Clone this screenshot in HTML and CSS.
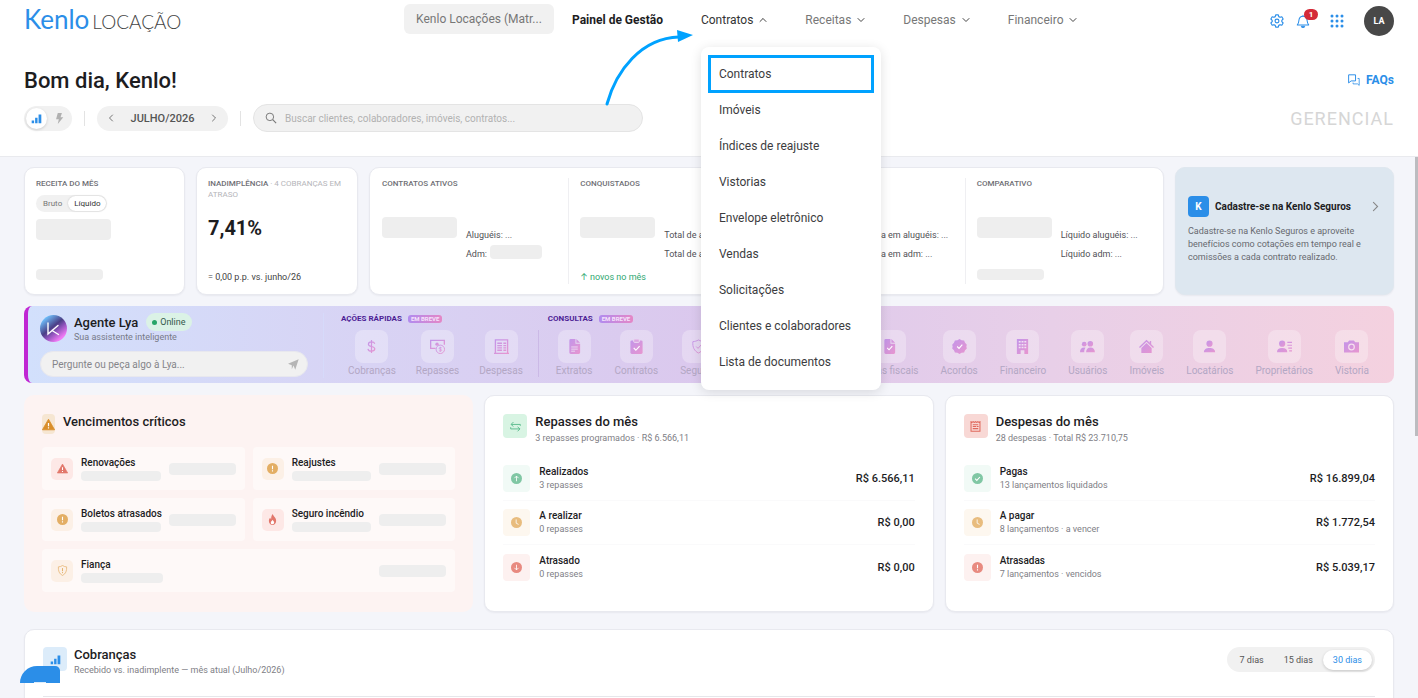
FILE: index.html
```html
<!DOCTYPE html>
<html lang="pt-BR">
<head>
<meta charset="utf-8">
<title>Kenlo Locação</title>
<link rel="stylesheet" href="styles.css">
</head>
<body>
<svg class="defs" width="0" height="0" aria-hidden="true">
  <defs>
    <linearGradient id="lya" x1="0" y1="0" x2="1" y2="1"><stop offset="0" stop-color="#c295ea"/><stop offset="1" stop-color="#e896cf"/></linearGradient>
    <symbol id="down" viewBox="0 0 8 8"><path d="M1 2.500l3 3 3-3" fill="none" stroke="#444" stroke-linecap="round"/></symbol>
    <symbol id="up" viewBox="0 0 8 8"><path d="M1 5.500l3-3 3 3" fill="none" stroke="#444" stroke-linecap="round"/></symbol>
    <symbol id="left" viewBox="0 0 8 8"><path d="M5.500 1l-3 3 3 3" fill="none" stroke="currentColor" stroke-width=".8" stroke-linecap="round"/></symbol>
    <symbol id="right" viewBox="0 0 8 8"><path d="M2.500 1l3 3-3 3" fill="none" stroke="currentColor" stroke-width=".8" stroke-linecap="round"/></symbol>
    <symbol id="bars" viewBox="0 0 16 16"><path d="M1 11h3.500v4H1zM6 7h3.500v8H6zM11 2h4v13h-4z" fill="currentColor"/></symbol>
    <symbol id="warn" viewBox="0 0 16 16"><path d="M8 1.500L15.500 14.500H.5z" fill="currentColor" stroke="currentColor" stroke-linejoin="round"/><path d="M8 6v4M8 11.500v1.500" stroke="#fff" stroke-width="1.500"/></symbol>
    <symbol id="alert" viewBox="0 0 16 16"><circle cx="8" cy="8" r="8" fill="currentColor"/><path d="M8 4v5M8 10.500v1.800" stroke="#fff" stroke-width="1.600"/></symbol>
    <symbol id="clock" viewBox="0 0 16 16"><circle cx="8" cy="8" r="8" fill="currentColor"/><path d="M7.500 3.500V9l3.500 1.800" fill="none" stroke="#fff" stroke-width="1.200"/></symbol>
    <symbol id="arrow-up" viewBox="0 0 16 16"><circle cx="8" cy="8" r="8" fill="currentColor"/><path d="M8 12V4.500M5 7.500l3-3 3 3" fill="none" stroke="#fff" stroke-width="1.200"/></symbol>
    <symbol id="arrow-down" viewBox="0 0 16 16"><circle cx="8" cy="8" r="8" fill="currentColor"/><path d="M8 4v7.500M5 8.500l3 3 3-3" fill="none" stroke="#fff" stroke-width="1.200"/></symbol>
    <symbol id="check" viewBox="0 0 16 16"><circle cx="8" cy="8" r="8" fill="currentColor"/><path d="M4.500 8.300L7 10.800l4.500-5" fill="none" stroke="#fff" stroke-width="1.500"/></symbol>
    <symbol id="flame" viewBox="0 0 16 16"><path d="M8.500 0c.3 3 4.800 5 4.800 9.800 0 3.600-2.300 6.200-5.300 6.200s-5.300-2.400-5.300-5.800c0-2.200 1-3.700 2-4.700.1 1 .5 1.700 1.300 2C6 4.500 6.500 1.800 8.500 0z" fill="currentColor"/><path d="M8.200 8.500c.4 1.500 2.200 2.200 2.200 4 0 1.400-1 2.500-2.400 2.500s-2.500-1-2.500-2.400c0-1.600 1.900-2.300 2.700-4.100z" fill="#fff"/></symbol>
    <symbol id="shield" viewBox="0 0 16 16"><path d="M8 .8c2 1.300 4 1.800 6 1.900.5 6-1.500 10.300-6 12.500C3.500 13 1.500 8.700 2 2.700 4 2.600 6 2.100 8 .8z" fill="none" stroke="currentColor"/><path d="M8 4.500V9M8 10.300v1.500" stroke="currentColor" stroke-width="1.400"/></symbol>
    <symbol id="list" viewBox="0 0 16 16"><path d="M1.500 1v14h13V1l-1.500 1-1.600-1-1.700 1L8 1 6.300 2 4.600 1 3 2z" fill="none" stroke="currentColor" stroke-width="1.500"/><path d="M4 5.500h8M4 8h5M10 8h2.500M4 11h8" stroke="currentColor" stroke-width="1.700"/></symbol>
  </defs>
</svg>

<header class="head">
  <div class="topbar">
    <a class="logo" href="#"><span class="logo-name">Kenlo</span><span class="logo-product">LOCAÇÃO</span></a>
    <button class="branch" type="button">Kenlo Locações (Matr...</button>
    <nav class="nav">
      <a class="nav-link strong" href="#">Painel de Gestão</a>
      <div class="nav-item">
        <a class="nav-link open" href="#">Contratos <svg class="chev"><use href="#up"/></svg></a>
        <svg class="pointer" viewBox="0 0 92 80" aria-hidden="true"><path d="M4 75C13 42 38 9 76 8" fill="none" stroke="#00a2ff" stroke-width="3" stroke-linecap="round"/><path d="M74 1l16 5-15 7z" fill="#00a2ff"/></svg>
        <div class="menu">
          <a class="menu-item marked" href="#">Contratos</a>
          <a class="menu-item" href="#">Imóveis</a>
          <a class="menu-item" href="#">Índices de reajuste</a>
          <a class="menu-item" href="#">Vistorias</a>
          <a class="menu-item" href="#">Envelope eletrônico</a>
          <a class="menu-item" href="#">Vendas</a>
          <a class="menu-item" href="#">Solicitações</a>
          <a class="menu-item" href="#">Clientes e colaboradores</a>
          <a class="menu-item" href="#">Lista de documentos</a>
        </div>
      </div>
      <a class="nav-link" href="#">Receitas <svg class="chev"><use href="#down"/></svg></a>
      <a class="nav-link" href="#">Despesas <svg class="chev"><use href="#down"/></svg></a>
      <a class="nav-link" href="#">Financeiro <svg class="chev"><use href="#down"/></svg></a>
    </nav>
    <div class="tools">
      <button class="tool" type="button" aria-label="Configurações"><svg viewBox="0 0 16 16"><path d="M6.500 1h3l.5 2 1.500.8 2-.6 1.500 2.500L13.500 7.200v1.600l1.500 1.500-1.500 2.500-2-.6-1.500.8-.5 2h-3L6 13l-1.500-.8-2 .6L1 10.300l1.500-1.500V7.200L1 5.700l1.500-2.500 2 .6L6 3z" fill="none" stroke="currentColor" stroke-width="1.300" stroke-linejoin="round"/><circle cx="8" cy="8" r="2.200" fill="none" stroke="currentColor" stroke-width="1.300"/></svg></button>
      <button class="tool bell" type="button" aria-label="Notificações"><svg viewBox="0 0 16 16"><path d="M1.500 12.500c1.500-1.300 1.600-3 1.800-5C3.500 4.500 5 2.500 8 2.500s4.500 2 4.700 5c.2 2 .3 3.700 1.800 5z" fill="none" stroke="currentColor" stroke-width="1.200" stroke-linejoin="round"/><path d="M8 1v2M6 14h4l-1 1.800H7z" stroke="currentColor" fill="currentColor"/></svg><span class="badge">1</span></button>
      <button class="tool apps" type="button" aria-label="Aplicativos"><svg viewBox="0 0 14 14" fill="currentColor"><circle cx="2" cy="2" r="1.500"/><circle cx="7" cy="2" r="1.500"/><circle cx="12" cy="2" r="1.500"/><circle cx="2" cy="7" r="1.500"/><circle cx="7" cy="7" r="1.500"/><circle cx="12" cy="7" r="1.500"/><circle cx="2" cy="12" r="1.500"/><circle cx="7" cy="12" r="1.500"/><circle cx="12" cy="12" r="1.500"/></svg></button>
      <button class="user" type="button">LA</button>
    </div>
  </div>

  <div class="welcome">
    <h1>Bom dia, Kenlo!</h1>
    <a class="faqs" href="#"><svg viewBox="0 0 16 16"><path d="M2 1h8.500v7.500H5L2 11z" fill="none" stroke="currentColor" stroke-width="1.200" stroke-linejoin="round"/><path d="M13 5.500h2V14l-2-1.800H7.500V10.500" fill="none" stroke="currentColor"/></svg>FAQs</a>
  </div>

  <div class="filters">
    <div class="view-toggle">
      <button class="view on" type="button" aria-label="Gerencial"><svg><use href="#bars"/></svg></button>
      <button class="view" type="button" aria-label="Rápido"><svg viewBox="0 0 16 16"><path d="M5.500 0h6L9.500 6h4L5.500 16 7 9H3z" fill="currentColor"/></svg></button>
    </div>
    <span class="rule"></span>
    <div class="month">
      <button type="button" aria-label="Mês anterior"><svg><use href="#left"/></svg></button>
      <span>JULHO/2026</span>
      <button type="button" aria-label="Próximo mês"><svg><use href="#right"/></svg></button>
    </div>
    <span class="rule"></span>
    <label class="search">
      <svg viewBox="0 0 16 16"><circle cx="6.500" cy="6.500" r="5" fill="none" stroke="currentColor" stroke-width="1.300"/><path d="M10.300 10.300l4.500 4.500" stroke="currentColor" stroke-width="1.500"/></svg>
      <input type="search" aria-label="Buscar" placeholder="Buscar clientes, colaboradores, imóveis, contratos...">
    </label>
    <span class="mode">GERENCIAL</span>
  </div>
</header>

<main class="main">
  <div class="scroll-thumb"></div>

  <section class="kpis">
    <article class="card kpi">
      <h2 class="label">RECEITA DO MÊS</h2>
      <div class="mini-toggle"><button type="button">Bruto</button><button class="on" type="button">Líquido</button></div>
      <span class="sk sk-value"></span>
      <span class="sk sk-foot push"></span>
    </article>
    <article class="card kpi">
      <h2 class="label">INADIMPLÊNCIA <span>· 4 COBRANÇAS EM ATRASO</span></h2>
      <strong class="rate">7,41%</strong>
      <span class="note push">= 0,00 p.p. vs. junho/26</span>
    </article>
    <article class="card contracts">
      <div class="col">
        <h2 class="label">CONTRATOS ATIVOS</h2>
        <div class="figures"><span class="sk sk-value"></span><div class="lines"><span>Aluguéis: ...</span><span class="with-sk">Adm: <i class="sk sk-adm"></i></span></div></div>
      </div>
      <div class="col">
        <h2 class="label">CONQUISTADOS</h2>
        <div class="figures"><span class="sk sk-value"></span><div class="lines"><span>Total de aluguéis: ...</span><span>Total de adm: ...</span></div></div>
        <span class="note good push">↑ novos no mês</span>
      </div>
      <div class="col">
        <h2 class="label"></h2>
        <div class="figures"><span class="sk sk-value"></span><div class="lines"><span>Perda em aluguéis: ...</span><span>Perda em adm: ...</span></div></div>
      </div>
      <div class="col">
        <h2 class="label">COMPARATIVO</h2>
        <div class="figures"><span class="sk sk-value"></span><div class="lines"><span>Líquido aluguéis: ...</span><span>Líquido adm: ...</span></div></div>
        <span class="sk sk-foot push"></span>
      </div>
    </article>
    <a class="card insure" href="#">
      <span class="insure-head"><b class="k">K</b><strong>Cadastre-se na Kenlo Seguros</strong><svg><use href="#right"/></svg></span>
      <span class="insure-text">Cadastre-se na Kenlo Seguros e aproveite benefícios como cotações em tempo real e comissões a cada contrato realizado.</span>
    </a>
  </section>

  <section class="lya">
    <div class="agent">
      <div class="agent-id">
        <svg class="agent-pic" viewBox="0 0 27 27"><defs><linearGradient id="orb" x1=".1" y1="0" x2=".9" y2="1"><stop offset=".1" stop-color="#6fc3ff"/><stop offset=".45" stop-color="#4a3f86"/><stop offset=".6" stop-color="#8a52b8"/><stop offset=".85" stop-color="#f07af5"/></linearGradient></defs><circle cx="13.500" cy="13.500" r="13.500" fill="url(#orb)"/><path d="M8 8v11l10-8.500M12 15.500l6.500 4" fill="none" stroke="#fff" stroke-width="1.400" stroke-linecap="round"/></svg>
        <div>
          <div class="agent-name"><h2>Agente Lya</h2><span class="online">Online</span></div>
          <p>Sua assistente inteligente</p>
        </div>
      </div>
      <div class="ask">
        <input type="text" aria-label="Mensagem" placeholder="Pergunte ou peça algo à Lya...">
        <button type="button" aria-label="Enviar"><svg viewBox="0 0 16 16"><path d="M15.500.5L10.500 15.500 8 9.500 5.500 15V9L0 7z" fill="currentColor"/></svg></button>
      </div>
    </div>
    <div class="group quick">
      <h3>AÇÕES RÁPIDAS <em>EM BREVE</em></h3>
      <div class="actions">
        <button class="action" type="button" disabled><span><svg viewBox="0 0 16 16"><path d="M11.500 5C11 3.500 9.800 3 8 3 6 3 4.700 4 4.700 5.500 4.700 9 11.500 7 11.500 10.500 11.500 12 10.200 13 8 13s-3.500-1-3.800-2.500M8 1v14" fill="none" stroke="url(#lya)" stroke-width="1.300"/></svg></span>Cobranças</button>
        <button class="action" type="button" disabled><span><svg viewBox="0 0 16 16"><path d="M6 10H.700V1.500h14.600V6" fill="none" stroke="url(#lya)" stroke-width="1.400"/><circle cx="7.500" cy="5.500" r="1.800" fill="url(#lya)"/><circle cx="11" cy="11" r="4.500" fill="none" stroke="url(#lya)"/><path d="M12.500 9.500c-1-.8-2.700-.5-2.700.5 0 1.300 2.700.7 2.700 2 0 1-2 1.200-3 .3M11 8.300v5.500" fill="none" stroke="url(#lya)" stroke-width=".8"/></svg></span>Repasses</button>
        <button class="action" type="button" disabled><span><svg viewBox="0 0 16 16"><path d="M1.500 15V1h13v14M0 15.300h16M3.500 4.500h5M3.500 7h5M3.500 9.500h5M3.500 12h5M10 4.500h3M10 7h3M10 9.500h3M10 12h3" fill="none" stroke="url(#lya)" stroke-width="1.400"/></svg></span>Despesas</button>
      </div>
    </div>
    <div class="group lookups">
      <h3>CONSULTAS <em>EM BREVE</em></h3>
      <div class="actions">
        <button class="action" type="button" disabled><span><svg viewBox="0 0 16 16"><path d="M4 0h5v5h5v9.500q0 1.500-1.500 1.500h-8.500q-1.500 0-1.500-1.500V1.500Q2.500 0 4 0zM10 0l4 4h-4z" fill="url(#lya)"/><path d="M4.500 8.500h7M4.500 10.800h7M4.500 13h4" stroke="#ecdcf3"/></svg></span>Extratos</button>
        <button class="action" type="button" disabled><span><svg viewBox="0 0 16 16"><path d="M3 1.500h10q1.500 0 1.500 1.500v11.500q0 1.500-1.500 1.500H3q-1.500 0-1.500-1.500V3Q1.500 1.500 3 1.500z" fill="url(#lya)"/><rect x="5" y="0" width="6" height="3.600" rx="1" fill="#dca7e2" stroke="#ecdcf3"/><path d="M5 9.500L7.300 12l4-4.500" fill="none" stroke="#fff" stroke-width="1.200"/></svg></span>Contratos</button>
        <button class="action" type="button" disabled><span><svg viewBox="0 0 16 16"><path d="M8 1c2 1.200 4 1.700 6 1.800.5 6-1.500 10-6 12.200C3.500 12.800 1.500 8.800 2 2.800 4 2.700 6 2.200 8 1zM5.500 8l2 2 3.500-4" fill="none" stroke="url(#lya)"/></svg></span>Seguros</button>
        <button class="action last-block" type="button" disabled><span><svg viewBox="0 0 16 16"><path d="M4 0h5v5h5v9.500q0 1.500-1.500 1.500h-8.500q-1.500 0-1.500-1.500V1.500Q2.500 0 4 0zM10 0l4 4h-4z" fill="url(#lya)"/><path d="M5.500 9.500l2 2 3.500-4" fill="none" stroke="#fff" stroke-width="1.200"/></svg></span>Notas fiscais</button>
        <button class="action" type="button" disabled><span><svg viewBox="0 0 16 16"><path d="M8 0l2.200 1.300 2.700.200 1 2.500L15.800 6 15.300 8l.5 2-1.900 2-1 2.500-2.700.200L8 16l-2.200-1.300-2.700-.2-1-2.500L.2 10 .7 8 .2 6l1.900-2 1-2.500 2.700-.2z" fill="url(#lya)"/><path d="M5.500 8l2 2L11 6" fill="none" stroke="#fff" stroke-width="1.200"/></svg></span>Acordos</button>
        <button class="action" type="button" disabled><span><svg viewBox="0 0 16 16"><path d="M2 0h12v16h-4v-4H6v4H2z" fill="url(#lya)"/><path d="M4 3h8M4 6h8M4 9h8" stroke="#f2e2f4" stroke-width="1.600" stroke-dasharray="2 1"/></svg></span>Financeiro</button>
        <button class="action" type="button" disabled><span><svg viewBox="0 0 16 16" fill="url(#lya)"><circle cx="11" cy="5" r="3"/><circle cx="4.500" cy="5.500" r="2.500"/><path d="M6.500 14c0-3 2-5 4.700-5s4.700 2 4.700 5zM0 14c0-3 1.500-5 4.500-5l1.500.3c-1 1.200-1.500 2.500-1.500 4.700z"/></svg></span>Usuários</button>
        <button class="action" type="button" disabled><span><svg viewBox="0 0 16 16"><path d="M0 8.500L8 .800l3.500 3.300V2H13v3.600l3 2.900-1 1L8 3 1 9.500zM8 4.300l5.500 5.200V15h-11V9.500z" fill="url(#lya)"/></svg></span>Imóveis</button>
        <button class="action" type="button" disabled><span><svg viewBox="0 0 16 16" fill="url(#lya)"><circle cx="8" cy="5" r="3.300"/><path d="M2 14c0-3 2.500-4.500 6-4.500s6 1.500 6 4.500z"/></svg></span>Locatários</button>
        <button class="action" type="button" disabled><span><svg viewBox="0 0 16 16" fill="url(#lya)"><circle cx="5.500" cy="5" r="3.300"/><path d="M0 14c0-3 2-4.500 5.500-4.500S11 11 11 14zM11 3h5v1.300h-5zM11 6h5v1.300h-5zM12 9h4v1.300h-4zM13 12h3v1.300h-3z"/></svg></span>Proprietários</button>
        <button class="action" type="button" disabled><span><svg viewBox="0 0 16 16"><path d="M0 3.500h4L5.500 1.500h5L12 3.500h4v11H0z" fill="url(#lya)"/><circle cx="8" cy="8.500" r="3" fill="none" stroke="#f6e0ee" stroke-width="1.300"/></svg></span>Vistoria</button>
      </div>
    </div>
  </section>

  <section class="panels">
    <article class="panel critical">
      <div class="panel-head"><span class="warn-box"><svg><use href="#warn"/></svg></span><h2>Vencimentos críticos</h2></div>
      <div class="due-grid">
        <div class="due"><span class="ico red"><svg><use href="#warn"/></svg></span><div><h3>Renovações</h3><i class="sk sk-line"></i></div><i class="sk sk-side"></i></div>
        <div class="due"><span class="ico amber"><svg><use href="#alert"/></svg></span><div><h3>Reajustes</h3><i class="sk sk-line"></i></div><i class="sk sk-side"></i></div>
        <div class="due"><span class="ico amber"><svg><use href="#alert"/></svg></span><div><h3>Boletos atrasados</h3><i class="sk sk-line"></i></div><i class="sk sk-side"></i></div>
        <div class="due"><span class="ico red"><svg><use href="#flame"/></svg></span><div><h3>Seguro incêndio</h3><i class="sk sk-line"></i></div><i class="sk sk-side"></i></div>
        <div class="due wide"><span class="ico amber"><svg><use href="#shield"/></svg></span><div><h3>Fiança</h3><i class="sk sk-line"></i></div><i class="sk sk-side"></i></div>
      </div>
    </article>

    <article class="panel card">
      <div class="panel-head"><span class="head-ico mint"><svg viewBox="0 0 16 16"><path d="M15 7V5H2M5 1.500L1.500 5 5 8M1 9v2.500h13M11 8.500l3.500 3-3.500 3.500" fill="none" stroke="currentColor" stroke-width="1.300"/></svg></span><div><h2>Repasses do mês</h2><p>3 repasses programados · R$ 6.566,11</p></div></div>
      <ul class="rows">
        <li><span class="row-ico green"><svg><use href="#arrow-up"/></svg></span><div><h3>Realizados</h3><p>3 repasses</p></div><strong>R$ 6.566,11</strong></li>
        <li><span class="row-ico sand"><svg><use href="#clock"/></svg></span><div><h3>A realizar</h3><p>0 repasses</p></div><strong>R$ 0,00</strong></li>
        <li><span class="row-ico rose"><svg><use href="#arrow-down"/></svg></span><div><h3>Atrasado</h3><p>0 repasses</p></div><strong>R$ 0,00</strong></li>
      </ul>
    </article>

    <article class="panel card">
      <div class="panel-head"><span class="head-ico coral"><svg><use href="#list"/></svg></span><div><h2>Despesas do mês</h2><p>28 despesas · Total R$ 23.710,75</p></div></div>
      <ul class="rows">
        <li><span class="row-ico green"><svg><use href="#check"/></svg></span><div><h3>Pagas</h3><p>13 lançamentos liquidados</p></div><strong>R$ 16.899,04</strong></li>
        <li><span class="row-ico sand"><svg><use href="#clock"/></svg></span><div><h3>A pagar</h3><p>8 lançamentos · a vencer</p></div><strong>R$ 1.772,54</strong></li>
        <li><span class="row-ico rose"><svg><use href="#alert"/></svg></span><div><h3>Atrasadas</h3><p>7 lançamentos · vencidos</p></div><strong>R$ 5.039,17</strong></li>
      </ul>
    </article>
  </section>

  <section class="card charges">
    <div class="charges-head">
      <span class="head-ico sky"><svg><use href="#bars"/></svg></span>
      <div><h2>Cobranças</h2><p>Recebido vs. inadimplente — mês atual (Julho/2026)</p></div>
      <div class="period"><button type="button">7 dias</button><button type="button">15 dias</button><button class="on" type="button">30 dias</button></div>
    </div>
    <div class="chart"></div>
    <button class="help" type="button" aria-label="Ajuda"><span></span></button>
  </section>
</main>
</body>
</html>
```

FILE: styles.css
```css
* { box-sizing: border-box; }
body {
  margin: 0;
  height: 100vh;
  display: flex;
  flex-direction: column;
  overflow: hidden;
  background: #f4f5fa;
  color: #1d1d1f;
  font-family: Roboto, Inter, sans-serif;
  font-size: 9px;
}
h1, h2, h3, p, ul { margin: 0; padding: 0; font-weight: 500; }
p { font-weight: 400; }
ul { list-style: none; }
a { color: inherit; text-decoration: none; }
button, input { font: inherit; color: inherit; border: 0; background: none; padding: 0; }
svg { display: block; flex: none; }
.defs { position: absolute; }

/* header */
.head {
  flex: none;
  background: #fff;
  border-bottom: 1px solid #e9eaee;
  padding: 0 24px 24px;
  position: relative;
  z-index: 2;
}
.topbar { display: flex; align-items: center; height: 42px; font-size: 12px; }
.logo { display: flex; align-items: baseline; gap: 3px; flex: 0 0 380px; margin-bottom: 4px; font-family: Lato, sans-serif; }
.logo-name { color: #2b8ee8; font-size: 26px; line-height: 36px; }
.logo-product { color: #444; font-size: 19px; font-weight: 300; }
.branch { flex: none; width: 150px; height: 30px; margin-bottom: 4px; border-radius: 6px; background: #f1f1f1; color: #777; text-align: center; white-space: nowrap; }
.nav { display: flex; gap: 38px; margin: 0 0 2px 18px; color: #777; white-space: nowrap; }
.nav-item { position: relative; }
.nav-link { display: flex; align-items: center; gap: 6px; line-height: 16px; }
.strong { color: #1d1d1f; font-weight: 700; }
.open { color: #333; }
.chev { width: 8px; height: 8px; }
.pointer { position: absolute; left: -98px; top: 17px; width: 92px; height: 80px; }
.menu {
  position: absolute;
  top: 35px;
  left: 0;
  width: 180px;
  padding: 9px 8px 10px;
  border-radius: 8px;
  background: #fff;
  box-shadow: 0 2px 12px rgba(0, 0, 0, .12);
  color: #3c3c3e;
}
.menu-item { display: flex; align-items: center; height: 36px; padding-left: 10px; }
.marked { outline: 3px solid #00a2ff; outline-offset: -2px; }
.tools { display: flex; align-items: center; gap: 12px; margin-left: auto; color: #2b8ee8; }
.tool { position: relative; }
.tool svg { width: 14px; height: 14px; }
.badge { position: absolute; left: 8px; top: -5px; width: 14px; height: 11px; border-radius: 6px; background: #d42a38; color: #fff; font-size: 8px; font-weight: 700; line-height: 11px; }
.apps { margin-left: 8px; }
.user { width: 30px; height: 30px; margin-left: 8px; border-radius: 50%; background: #484848; color: #fff; font-size: 9px; font-weight: 700; }
.welcome { display: flex; align-items: center; justify-content: space-between; margin-top: 22px; height: 32px; }
h1 { font-size: 22px; font-weight: 500; }
.faqs { display: flex; align-items: center; gap: 6px; color: #2b8ee8; font-size: 12px; font-weight: 700; }
.faqs svg { width: 13px; height: 13px; }
.filters { display: flex; align-items: center; gap: 12px; margin-top: 8px; height: 28px; }
.view-toggle { display: flex; align-items: center; justify-content: space-between; width: 48px; height: 25px; padding: 0 2px; border-radius: 13px; background: #f1f1f1; }
.view { display: grid; place-items: center; width: 21px; height: 21px; border-radius: 50%; color: #b0b0b0; }
.view svg { width: 11px; height: 11px; }
.view.on { background: #fff; color: #2b8ee8; box-shadow: 0 1px 3px rgba(0, 0, 0, .15); }
.rule { width: 1px; height: 15px; background: #e3e3e3; }
.month { display: flex; align-items: center; justify-content: space-between; width: 131px; height: 25px; padding: 0 10px; border-radius: 13px; background: #f1f1f1; color: #555; font-size: 11px; font-weight: 500; }
.month svg { width: 8px; height: 8px; }
.search { display: flex; align-items: center; gap: 8px; width: 390px; height: 28px; padding: 0 11px; border: 1px solid #e4e4e4; border-radius: 14px; background: #f1f1f1; color: #777; }
.search svg { width: 12px; height: 12px; }
.search input { flex: 1; font-size: 10px; outline: 0; }
.search ::placeholder { color: #b2b2b2; opacity: 1; }
.mode { margin-left: auto; color: #d6d6d6; font-size: 18px; letter-spacing: 1px; }

/* content */
.main { position: relative; flex: 1; min-height: 0; overflow: hidden; padding: 10px 24px 0; }
.scroll-thumb { position: absolute; top: 0; right: 0; width: 3px; height: 279px; background: #bcbcc0; }
.card { background: #fff; border: 1px solid #e8e9ef; border-radius: 10px; box-shadow: 0 1px 2px rgba(30, 30, 60, .06); }
.sk { display: block; flex: none; border-radius: 4px; background: #eeeeee; }
.sk-value { width: 75px; height: 21px; }
.sk-foot { width: 67px; height: 11px; }
.push { margin-top: auto; }
.kpis { display: grid; grid-template-columns: 161fr 162fr 795fr 219fr; gap: 11px; height: 128px; }
.kpis > * { min-width: 0; }
.kpi { display: flex; flex-direction: column; padding: 10px 11px 14px; }
.label { min-height: 11px; color: #6f6f75; font-size: 8px; line-height: 11px; }
.label span { color: #b5b5ba; font-weight: 400; }
.mini-toggle { display: flex; align-self: flex-start; margin: 6px 0 7px; padding: 1px; border-radius: 9px; background: #f1f1f1; color: #777; font-size: 8px; }
.mini-toggle button { height: 15px; padding: 0 6px; border-radius: 8px; }
.mini-toggle .on { background: #fff; color: #333; box-shadow: 0 0 2px rgba(0, 0, 0, .2); }
.rate { margin-top: 16px; font-size: 20px; font-weight: 700; line-height: 24px; }
.note { color: #444; font-size: 9px; line-height: 11px; white-space: nowrap; }
.kpi .note { margin-bottom: -3px; }
.good { color: #2fa872; }
.contracts { display: grid; grid-template-columns: repeat(4, 1fr); padding: 10px 0; }
.col { display: flex; flex-direction: column; min-width: 0; padding: 0 0 1px 11px; border-left: 1px solid #efeff2; }
.col:first-child { border-left-color: transparent; }
.col .sk-foot { margin-bottom: 3px; }
.figures { display: flex; gap: 9px; margin-top: 28px; height: 50px; }
.lines { display: flex; flex-direction: column; gap: 8px; margin-top: 13px; color: #505055; line-height: 11px; white-space: nowrap; }
.with-sk { display: flex; gap: 3px; height: 11px; }
.sk-adm { width: 52px; height: 14px; margin-top: -4px; }
.insure { display: flex; flex-direction: column; justify-content: center; gap: 8px; padding: 0 12px 3px; background: #dde7f0; border-color: #dfe7ef; }
.insure-head { display: flex; align-items: center; gap: 6px; font-size: 10px; white-space: nowrap; }
.insure-head strong { font-weight: 700; }
.insure-head svg { width: 11px; height: 11px; margin-left: auto; color: #888; }
.k { display: grid; place-items: center; width: 21px; height: 21px; border-radius: 4px; background: #2b8ee8; color: #fff; }
.insure-text { color: #67696f; line-height: 13px; }

/* assistant */
.lya {
  display: flex;
  height: 77px;
  margin-top: 11px;
  padding: 7px 25px 5px 12px;
  border-left: 4px solid #c026d3;
  border-radius: 8px;
  background: linear-gradient(90deg, #d2e0fc, #d8d3f4 25%, #dbc8ed 50%, #e8cfe8 75%, #f4d1df);
}
.agent { flex: 0 0 284px; padding-right: 15px; border-right: 1px solid #d6dafa; }
.agent-id { display: flex; align-items: center; gap: 7px; }
.agent-id p { color: #777a88; font-size: 9px; line-height: 12px; }
.agent-pic { width: 27px; height: 27px; }
.agent-name { display: flex; align-items: center; gap: 8px; }
.agent-name h2 { font-size: 13px; }
.online { display: flex; align-items: center; gap: 3px; height: 18px; padding: 0 6px; border-radius: 9px; background: #dbf2e6; color: #34584a; font-size: 9px; }
.online::before { content: ""; width: 5px; height: 5px; border-radius: 50%; background: #27a567; }
.ask { display: flex; align-items: center; height: 26px; margin-top: 8px; padding: 0 8px 0 11px; border: 1px solid #e8e8ee; border-radius: 13px; background: #f1f1f1; color: #b5b5b5; }
.ask input { flex: 1; font-size: 10px; outline: 0; }
.ask ::placeholder { color: #85858a; opacity: 1; }
.ask svg { width: 11px; height: 11px; }
.group h3 { display: flex; align-items: center; gap: 6px; color: #4d1d95; font-size: 8px; font-weight: 700; line-height: 12px; white-space: nowrap; }
.group em { padding: 0 3px; border-radius: 3px; background: linear-gradient(90deg, #b18bef, #e487c6); color: #f5e2fb; font-size: 6px; font-style: normal; font-weight: 700; line-height: 8px; }
.actions { display: flex; gap: 22px; margin-top: 5px; }
.action { display: flex; flex: none; flex-direction: column; align-items: center; gap: 2px; color: #b3a7c4; font-size: 10px; line-height: 12px; white-space: nowrap; }
.action span { display: grid; place-items: center; width: 33px; height: 33px; border-radius: 8px; background: rgba(255, 255, 255, .28); }
.action svg { width: 15px; height: 15px; }
.quick { padding-left: 17px; }
.quick .actions { gap: 20px; padding: 0 15px 0 7px; border-right: 1px solid #cbb9e6; }
.lookups { flex: 1; min-width: 0; padding-left: 9px; }
.lookups .actions { padding-left: 8px; }
.last-block { margin-left: auto; }

/* panels */
.panels { display: grid; grid-template-columns: repeat(3, minmax(0, 1fr)); gap: 11px; margin-top: 12px; }
.panel { min-height: 217px; padding: 18px; border-radius: 10px; }
.critical { padding-top: 19px; background: #fdf3f2; }
.panel-head { display: flex; gap: 8px; }
.panel h2, .charges h2 { font-size: 13px; line-height: 16px; }
.panel p, .charges p { color: #808086; font-size: 9px; line-height: 14px; white-space: nowrap; }
.panel-head p { line-height: 16px; }
.warn-box { display: grid; place-items: center; width: 13px; height: 20px; border-radius: 4px; background: #f6e6d2; color: #d98e2b; }
.warn-box svg { width: 13px; height: 13px; }
.due-grid { display: grid; grid-template-columns: repeat(2, minmax(0, 1fr)); gap: 8px; margin-top: 13px; }
.due { display: flex; align-items: center; gap: 8px; height: 43px; padding: 0 9px; border-radius: 4px; background: #fef9f8; }
.due.wide { grid-column: 1 / -1; }
.due h3 { font-size: 10px; line-height: 13px; white-space: nowrap; }
.due > div { flex: 1; min-width: 0; }
.ico { display: grid; flex: none; place-items: center; width: 22px; height: 22px; border-radius: 5px; }
.ico svg { width: 11px; height: 11px; }
.red { background: #fde8e6; color: #e2776b; }
.amber { background: #fcf0e6; color: #e3ae64; }
.sk-line { max-width: 82px; height: 10px; margin-top: 2px; }
.sk-side { width: 67px; height: 12px; }
.head-ico { display: grid; flex: none; place-items: center; width: 24px; height: 24px; border-radius: 4px; }
.head-ico svg { width: 11px; height: 11px; }
.mint { background: #d8f4e3; color: #55b98a; }
.coral { background: #f8d8d5; color: #e0695d; }
.sky { background: #dcecfa; color: #2b8ee8; }
.rows { margin-top: 11px; }
.rows li { display: flex; align-items: center; gap: 9px; height: 44px; border-bottom: 1px solid #fafafb; }
.rows li:last-child { border-bottom: 0; }
.rows h3 { font-size: 10px; line-height: 13px; }
.rows strong { margin-left: auto; font-size: 11px; font-weight: 500; }
.row-ico { display: grid; flex: none; place-items: center; width: 27px; height: 27px; border-radius: 4px; }
.row-ico svg { width: 11px; height: 11px; }
.green { background: #f1faf6; color: #80c7a4; }
.sand { background: #fdf7ef; color: #e8bc7e; }
.rose { background: #fdf1f0; color: #e88a80; }

/* charges */
.charges { position: relative; margin-top: 17px; padding: 17px 18px; }
.charges-head { display: flex; gap: 7px; }
.period { display: flex; align-items: center; height: 25px; margin-left: auto; padding: 0 3px; border-radius: 13px; background: #f1f1f1; color: #555; font-size: 9px; }
.period button { height: 20px; padding: 0 10px; border-radius: 10px; }
.period .on { background: #fff; color: #2b8ee8; box-shadow: 0 1px 3px rgba(0, 0, 0, .18); }
.chart { height: 200px; margin-top: 19px; border-top: 1px solid #e6e6ea; }
.help { position: absolute; left: -5px; top: 36px; display: flex; align-items: flex-end; justify-content: center; width: 40px; height: 17px; border-radius: 18px 5px 0 0; background: #2b8ee8; }
.help span { width: 12px; height: 1px; background: #dcecfa; }
```
